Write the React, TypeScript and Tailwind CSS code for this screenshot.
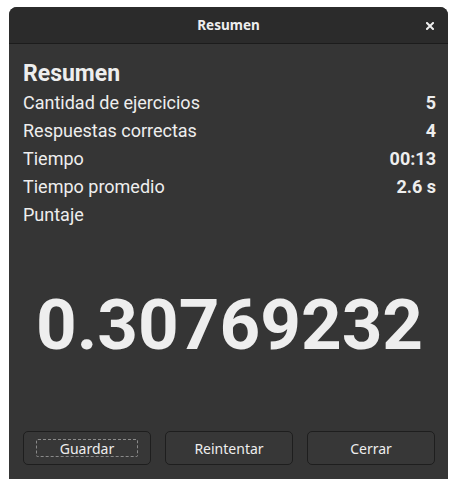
import React from "react";

const rows: [string, string][] = [
  ["Cantidad de ejercicios", "5"],
  ["Respuestas correctas", "4"],
  ["Tiempo", "00:13"],
  ["Tiempo promedio", "2.6 s"],
  ["Puntaje", ""],
];

function CloseIcon() {
  return (
    <svg width="8" height="8" viewBox="0 0 8 8" className="block">
      <path d="M1 1 L7 7 M7 1 L1 7" stroke="#eeeeee" strokeWidth="2" strokeLinecap="square" />
    </svg>
  );
}

export default function App() {
  return (
    <div className="min-h-[489px] w-[458px] bg-white pl-[9px] pt-[7px]">
      {/* window */}
      <div className="flex h-[472px] w-[439px] flex-col overflow-hidden rounded-t-[8px] bg-[#353535] text-[#eeeeee]">
        {/* header bar */}
        <div className="relative flex h-[37px] shrink-0 items-center justify-center border-b border-[#1c1c1c] bg-[#2b2b2b]">
          <span className="font-['Noto_Sans',sans-serif] text-[13.5px] font-bold">Resumen</span>
          <div className="absolute right-[14px] top-[15px]">
            <CloseIcon />
          </div>
        </div>

        {/* content */}
        <div className="flex flex-1 flex-col pl-[14px] pr-[12px] pt-[14px] font-['Roboto',sans-serif]">
          <div className="text-[23px] font-bold leading-[31px]">Resumen</div>
          {rows.map(([label, value]) => (
            <div key={label} className="flex justify-between text-[18px] leading-[28px]">
              <span>{label}</span>
              <span className="font-bold">{value}</span>
            </div>
          ))}

          <div className="flex flex-1 items-center justify-center pb-[12px]">
            <span className="text-[71px] font-bold leading-none">0.30769232</span>
          </div>

          {/* buttons */}
          <div className="grid grid-cols-3 gap-[14px] pb-[14px] pr-[1px] font-['Noto_Sans',sans-serif] text-[14px]">
            <button className="flex h-[34px] items-center justify-center rounded-[5px] border border-[#1e1e1e] bg-[#373737] px-[12px] py-[7px]">
              <span className="flex h-full w-full items-center justify-center rounded-[2px] border border-dashed border-[#8a8a8a]">
                Guardar
              </span>
            </button>
            <button className="flex h-[34px] items-center justify-center rounded-[5px] border border-[#1e1e1e] bg-[#373737]">
              Reintentar
            </button>
            <button className="flex h-[34px] items-center justify-center rounded-[5px] border border-[#1e1e1e] bg-[#373737]">
              Cerrar
            </button>
          </div>
        </div>
      </div>
    </div>
  );
}
